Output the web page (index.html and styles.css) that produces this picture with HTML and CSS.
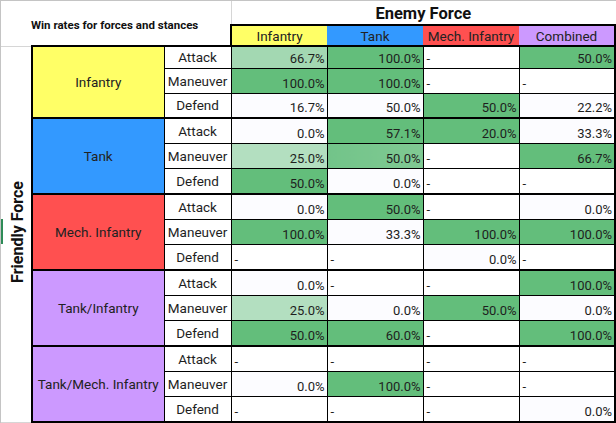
FILE: index.html
```html
<!DOCTYPE html>
<html>
<head>
<meta charset="utf-8">
<link rel="stylesheet" href="styles.css">
</head>
<body>
<div class="sheet">
  <table class="grid">
    <colgroup>
      <col class="c0"><col class="c1"><col class="c2">
      <col class="cd"><col class="cd"><col class="cd"><col class="cd">
    </colgroup>
    <tr class="row-title">
      <td class="corner" colspan="3" rowspan="2"><span class="win">Win rates for forces and stances</span></td>
      <td class="enemy" colspan="4">Enemy Force</td>
    </tr>
    <tr class="row-head">
      <td class="hd yel first">Infantry</td>
      <td class="hd blu">Tank</td>
      <td class="hd red">Mech. Infantry</td>
      <td class="hd pur last">Combined</td>
    </tr>

    <tr class="row-a1 gtop">
      <td class="friendly" rowspan="15"><span class="ff">Friendly Force</span></td>
      <td class="force yel" rowspan="3">Infantry</td>
      <td class="st">Attack</td>
      <td class="v g1">66.7%</td><td class="v g">100.0%</td><td class="d">-</td><td class="v g">50.0%</td>
    </tr>
    <tr class="row">
      <td class="st">Maneuver</td>
      <td class="v g">100.0%</td><td class="v g">100.0%</td><td class="d">-</td><td class="d">-</td>
    </tr>
    <tr class="row">
      <td class="st">Defend</td>
      <td class="v w">16.7%</td><td class="v w">50.0%</td><td class="v g">50.0%</td><td class="v w">22.2%</td>
    </tr>

    <tr class="row gtop">
      <td class="force blu" rowspan="3">Tank</td>
      <td class="st">Attack</td>
      <td class="v w">0.0%</td><td class="v g">57.1%</td><td class="v g">20.0%</td><td class="v w">33.3%</td>
    </tr>
    <tr class="row">
      <td class="st">Maneuver</td>
      <td class="v g2">25.0%</td><td class="v g3">50.0%</td><td class="d">-</td><td class="v g">66.7%</td>
    </tr>
    <tr class="row row-l">
      <td class="st">Defend</td>
      <td class="v g">50.0%</td><td class="v w">0.0%</td><td class="d">-</td><td class="d">-</td>
    </tr>

    <tr class="row gtop">
      <td class="force red" rowspan="3">Mech. Infantry</td>
      <td class="st">Attack</td>
      <td class="v w">0.0%</td><td class="v g">50.0%</td><td class="d">-</td><td class="v w">0.0%</td>
    </tr>
    <tr class="row">
      <td class="st">Maneuver</td>
      <td class="v g">100.0%</td><td class="v w">33.3%</td><td class="v g">100.0%</td><td class="v g">100.0%</td>
    </tr>
    <tr class="row row-l">
      <td class="st">Defend</td>
      <td class="d">-</td><td class="d">-</td><td class="v w">0.0%</td><td class="d">-</td>
    </tr>

    <tr class="row gtop">
      <td class="force pur" rowspan="3">Tank/Infantry</td>
      <td class="st">Attack</td>
      <td class="v w">0.0%</td><td class="d">-</td><td class="d">-</td><td class="v g">100.0%</td>
    </tr>
    <tr class="row">
      <td class="st">Maneuver</td>
      <td class="v g2">25.0%</td><td class="v w">0.0%</td><td class="v g">50.0%</td><td class="v w">0.0%</td>
    </tr>
    <tr class="row row-l">
      <td class="st">Defend</td>
      <td class="v g">50.0%</td><td class="v g">60.0%</td><td class="d">-</td><td class="v g">100.0%</td>
    </tr>

    <tr class="row gtop">
      <td class="force pur" rowspan="3">Tank/Mech. Infantry</td>
      <td class="st">Attack</td>
      <td class="d">-</td><td class="d">-</td><td class="d">-</td><td class="d">-</td>
    </tr>
    <tr class="row">
      <td class="st">Maneuver</td>
      <td class="v w">0.0%</td><td class="v g">100.0%</td><td class="d">-</td><td class="d">-</td>
    </tr>
    <tr class="row row-l bottom">
      <td class="st">Defend</td>
      <td class="d">-</td><td class="d">-</td><td class="d">-</td><td class="v w">0.0%</td>
    </tr>
  </table>
  <div class="marker"></div>
</div>
</body>
</html>
```
FILE: styles.css
```css
html, body {
  margin: 0;
  padding: 0;
  background: #ffffff;
}
.sheet {
  position: relative;
  width: 616px;
  height: 423px;
  box-sizing: border-box;
  border-top: 1px solid #c4c4c4;
  border-left: 1px solid #c4c4c4;
  overflow: hidden;
  font-family: Roboto, "Liberation Sans", sans-serif;
  font-size: 13px;
  color: #1e1e1e;
}
.grid {
  border-collapse: collapse;
  table-layout: fixed;
  width: 614px;
}
.c0 { width: 31px; }
.c1 { width: 132px; }
.c2 { width: 67px; }
.cd { width: 96px; }
td {
  padding: 0;
  overflow: hidden;
  white-space: nowrap;
  line-height: 16px;
}
.row-title { height: 24px; }
.row-head { height: 21px; }
.row-a1 { height: 22px; }
.row { height: 25px; }
.row-l { height: 26px; }

.corner {
  vertical-align: top;
  border-right: 1px solid #d6d6d6;
  border-bottom: 1px solid #d6d6d6;
  padding: 16px 0 0 30px;
}
.win {
  font-weight: 700;
  font-size: 11.5px;
  color: #111;
}
.enemy {
  text-align: center;
  vertical-align: middle;
  font-weight: 700;
  font-size: 16.5px;
  line-height: 19px;
  color: #111;
  padding-top: 1px;
}
.hd {
  text-align: center;
  vertical-align: middle;
  font-size: 13.5px;
  color: #222;
  border-top: 2px solid #000;
}
.hd.first { border-left: 2px solid #000; }
.hd.last { border-right: 2px solid #000; }

.yel { background: #ffff66; }
.blu { background: #3399ff; }
.red { background: #ff5050; }
.pur { background: #cc99ff; }

.friendly {
  vertical-align: middle;
  text-align: center;
  border-bottom: 1px solid #d6d6d6;
}
.ff {
  display: inline-block;
  writing-mode: vertical-rl;
  transform: rotate(180deg);
  font-weight: 700;
  font-size: 16px;
  line-height: 18px;
  color: #111;
  margin-left: 3px;
}
.force {
  text-align: center;
  vertical-align: middle;
  font-size: 13.5px;
  color: #222;
  border: 2px solid #000;
  border-right: 1px solid #000;
}
.st {
  text-align: center;
  vertical-align: middle;
  font-size: 13.5px;
  background: #fff;
  border: 1px solid #000;
}
.v, .d {
  border: 1px solid #000;
  vertical-align: bottom;
  padding-bottom: 1px;
}
.v {
  text-align: right;
  padding-right: 2px;
}
.d {
  text-align: left;
  padding-left: 3px;
  background: #fff;
}
.gtop td { border-top: 2px solid #000; }
.gtop td.friendly { border-top: none; }
tr td:last-child.v, tr td:last-child.d { border-right: 2px solid #000; }
.bottom td { border-bottom: 2px solid #000; }

.g { background: #63be7b; }
.g1 { background: #a3d8b2; }
.g2 { background: #b3dfc0; }
.g3 { background: linear-gradient(90deg, #72c489, #80c993); }
.w { background: #fcfcff; }

.marker {
  position: absolute;
  left: 0;
  top: 218px;
  width: 2px;
  height: 25px;
  background: #2e8b57;
}
```
